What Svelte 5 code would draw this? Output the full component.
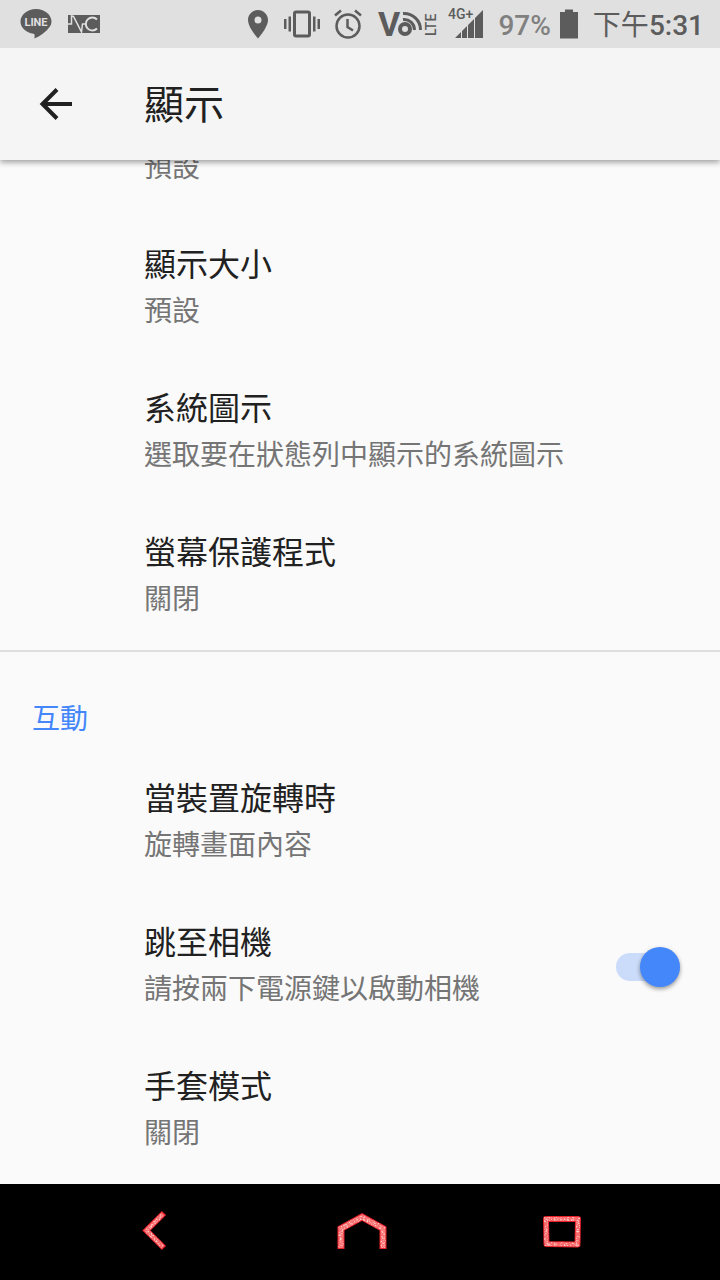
<script lang="ts">
	interface Row {
		title: string;
		summary: string;
	}

	const displayRows: Row[] = [
		{ title: '顯示大小', summary: '預設' },
		{ title: '系統圖示', summary: '選取要在狀態列中顯示的系統圖示' },
		{ title: '螢幕保護程式', summary: '關閉' }
	];

	let cameraJump = $state(true);
</script>

{#snippet row(item: Row)}
	<li>
		<button class="row" type="button">
			<span class="title">{item.title}</span>
			<span class="summary">{item.summary}</span>
		</button>
	</li>
{/snippet}

<div class="screen">
	<div class="status-bar">
		<svg width="32" height="32" viewBox="0 0 32 32" aria-hidden="true">
			<path d="M16 1C7.500 1 0.500 6.600 0.500 13.500c0 6.200 5.500 11.200 13 12.300 1.500.3 1.200 1.600.9 4.700 4-1.600 10-5.400 13.300-9.300 2.500-2.500 3.800-5 3.800-7.700C31.500 6.600 24.500 1 16 1z" fill="#5c5c5c" />
			<text x="16" y="18" text-anchor="middle" font-size="11" font-weight="700" fill="#e0e0e0">LINE</text>
		</svg>
		<svg width="32" height="32" viewBox="0 0 32 32" aria-hidden="true">
			<path d="M0 7h32v18H0z" fill="#5c5c5c" />
			<path d="M0 16h3.500V8l2 .5L13.500 24l1-8H18" fill="none" stroke="#e0e0e0" stroke-width="1.500" />
			<path d="M29 11.500a6.500 6.500 0 1 0 0 9" fill="none" stroke="#e0e0e0" stroke-width="2" />
		</svg>

		<div class="system">
			<svg width="24" height="32" viewBox="0 0 24 32" aria-hidden="true">
				<path fill-rule="evenodd" d="M12 2C6.500 2 2 6.500 2 12c0 7.500 10 18.500 10 18.500S22 19.500 22 12C22 6.500 17.500 2 12 2zm0 6.500a3.500 3.500 0 1 1 0 7 3.500 3.500 0 0 1 0-7z" fill="#5c5c5c" />
			</svg>
			<svg width="36" height="32" viewBox="0 0 36 32" aria-hidden="true">
				<rect x="10.500" y="4" width="15" height="24" rx="1.500" fill="none" stroke="#5c5c5c" stroke-width="3" />
				<path d="M0 11h2.500v10H0zM4.500 8.500H7v15H4.500zM29 8.500h2.500v15H29zM33.500 11H36v10h-2.500z" fill="#5c5c5c" />
			</svg>
			<svg width="28" height="32" viewBox="0 0 28 32" aria-hidden="true">
				<circle cx="14" cy="18" r="11.500" fill="none" stroke="#5c5c5c" stroke-width="2.500" />
				<path d="M13.500 11v8l5.500 3.500M1 7.500l6-5M27 7.500l-6-5" fill="none" stroke="#5c5c5c" stroke-width="2.500" />
			</svg>
			<svg class="volte" width="60" height="32" viewBox="0 0 60 32" aria-hidden="true">
				<text x="0" y="28" font-size="34" font-weight="700" fill="#5c5c5c">V</text>
				<circle cx="27" cy="21" r="5" fill="none" stroke="#5c5c5c" stroke-width="4" />
				<path d="M25 11.500a10.500 10.500 0 0 1 11.500 10.500M25 5.500a16.500 16.500 0 0 1 17.500 16.500" fill="none" stroke="#5c5c5c" stroke-width="3" />
				<text transform="translate(58 28) rotate(-90)" font-size="14" font-weight="500" fill="#5c5c5c">LTE</text>
			</svg>
			<svg class="signal" width="36" height="32" viewBox="0 0 36 32" aria-hidden="true">
				<path d="M7 30l6-6v6zM14 30v-7l5-5v12zM20 30V17l6-6v19zM27 30V10l8-8v28z" fill="#5c5c5c" />
				<path d="M13.500 23v7M19.500 17v13M26.500 10v20" stroke="#e0e0e0" />
				<text x="0" y="11" font-size="14" font-weight="500" fill="#5c5c5c">4G+</text>
			</svg>
			<span class="battery-level">97%</span>
			<svg width="20" height="32" viewBox="0 0 20 32" aria-hidden="true">
				<path d="M1 4h5V1.500h8V4h5v26.500H1z" fill="#5c5c5c" />
			</svg>
			<span class="clock"><span class="period">下午</span>5:31</span>
		</div>
	</div>

	<header>
		<button class="back" type="button" aria-label="返回">
			<svg width="32" height="32" viewBox="0 0 32 32" aria-hidden="true">
				<path d="M32 16H2.500M17 1.500L2.500 16 17 30.500" fill="none" stroke="#212121" stroke-width="4" />
			</svg>
		</button>
		<h1>顯示</h1>
	</header>

	<main>
		<ul class="group">
			<li>
				<button class="row scrolled" type="button">
					<span class="summary">預設</span>
				</button>
			</li>
			{#each displayRows as item}
				{@render row(item)}
			{/each}
		</ul>

		<section>
			<h2>互動</h2>
			<ul>
				{@render row({ title: '當裝置旋轉時', summary: '旋轉畫面內容' })}
				<li>
					<label class="row toggle">
						<span class="text">
							<span class="title">跳至相機</span>
							<span class="summary">請按兩下電源鍵以啟動相機</span>
						</span>
						<input type="checkbox" role="switch" bind:checked={cameraJump} />
					</label>
				</li>
				{@render row({ title: '手套模式', summary: '關閉' })}
			</ul>
		</section>
	</main>

	<nav>
		<!-- speckle shared by the three chalk icons -->
		<svg class="defs" width="0" height="0" aria-hidden="true">
			<filter id="chalk" x="-20%" y="-20%" width="140%" height="140%">
				<feTurbulence type="fractalNoise" baseFrequency="0.6" numOctaves="2" seed="4" />
				<feColorMatrix values="0 0 0 0 1  0 0 0 0 0.85  0 0 0 0 0.83  2.5 0 0 0 -1.2" />
				<feComposite in2="SourceGraphic" operator="in" result="grain" />
				<feMerge>
					<feMergeNode in="SourceGraphic" />
					<feMergeNode in="grain" />
				</feMerge>
			</filter>
		</svg>
		<button type="button" aria-label="返回上一頁">
			<svg width="56" height="48" viewBox="0 0 56 48" aria-hidden="true">
				<g fill="none">
					<path d="M36 5L18.500 22.500 36 40" stroke="#e8202c" stroke-width="6" />
					<path d="M35 6L18.500 22.500 35 39" stroke="#fb6b6b" stroke-width="4" filter="url(#chalk)" />
				</g>
			</svg>
		</button>
		<button type="button" aria-label="主畫面">
			<svg width="56" height="48" viewBox="0 0 56 48" aria-hidden="true">
				<g fill="none">
					<path d="M9 41V20.500L30 9l21 11.500V41" stroke="#e8202c" stroke-width="7" />
					<path d="M9 40V20.500L30 9l21 11.500V40" stroke="#fb7070" stroke-width="5" filter="url(#chalk)" />
				</g>
			</svg>
		</button>
		<button type="button" aria-label="最近使用">
			<svg width="56" height="48" viewBox="0 0 56 48" aria-hidden="true">
				<g fill="none">
					<path d="M10 11h32l-.5 25.500-31 -.5z" stroke="#e8202c" stroke-width="6" stroke-linejoin="round" />
					<path d="M10 11h32l-.5 25.500-31 -.5z" stroke="#fb6b6b" stroke-width="4" filter="url(#chalk)" />
				</g>
			</svg>
		</button>
	</nav>
</div>

<style>
	:global(body) {
		margin: 0;
		background: #fafafa;
	}

	.screen {
		display: flex;
		flex-direction: column;
		min-height: 100vh;
		font-family: Roboto, 'Noto Sans CJK TC', sans-serif;
		color: #212121;
	}

	svg {
		display: block;
		flex: none;
		overflow: visible;
	}

	button {
		padding: 0;
		border: 0;
		background: none;
		font: inherit;
		color: inherit;
		text-align: left;
		cursor: pointer;
	}

	ul {
		margin: 0;
		padding: 0;
		list-style: none;
	}

	.status-bar {
		position: relative;
		z-index: 2;
		display: flex;
		align-items: center;
		gap: 16px;
		height: 48px;
		padding: 0 16px 0 20px;
		background: #e0e0e0;
		color: #5c5c5c;
	}

	.system {
		display: flex;
		align-items: center;
		gap: 14px;
		margin-left: auto;
	}

	.volte {
		margin-left: 2px;
	}

	.signal {
		margin-left: -4px;
	}

	.battery-level,
	.clock {
		padding-top: 4px;
		font-size: 28px;
		line-height: 32px;
		font-weight: 500;
		white-space: nowrap;
	}

	.battery-level {
		margin-right: -6px;
		color: #808080;
	}

	.period {
		font-weight: 400;
	}

	header {
		position: relative;
		z-index: 1;
		display: flex;
		align-items: center;
		height: 112px;
		background: #f5f5f5;
		box-shadow: 0 2px 6px rgba(0, 0, 0, 0.4);
	}

	.back {
		display: flex;
		align-items: center;
		width: 144px;
		height: 112px;
		padding-left: 40px;
		box-sizing: border-box;
	}

	h1 {
		margin: 0;
		padding-top: 4px;
		font-size: 40px;
		line-height: 48px;
		font-weight: 400;
	}

	main {
		flex: 1;
	}

	.group {
		padding-bottom: 2px;
		border-bottom: 2px solid #dedede;
	}

	.row {
		display: flex;
		flex-direction: column;
		justify-content: center;
		gap: 4px;
		box-sizing: border-box;
		width: 100%;
		min-height: 144px;
		padding: 26px 40px 28px 144px;
	}

	/* first entry is scrolled halfway under the header */
	.row.scrolled {
		justify-content: flex-end;
		height: 56px;
		min-height: 0;
		padding-top: 0;
	}

	.row.toggle {
		flex-direction: row;
		align-items: center;
		justify-content: space-between;
		cursor: pointer;
	}

	.text {
		display: flex;
		flex-direction: column;
		gap: 4px;
	}

	.title {
		font-size: 32px;
		line-height: 46px;
	}

	.summary {
		color: #757575;
		font-size: 28px;
		line-height: 40px;
	}

	h2 {
		margin: 0;
		padding: 48px 32px 10px;
		color: #4487fb;
		font-size: 28px;
		line-height: 40px;
		font-weight: 400;
	}

	input {
		appearance: none;
		position: relative;
		flex: none;
		width: 64px;
		height: 28px;
		margin: 4px 0 0;
		border-radius: 14px;
		background: #c0c0c0;
		cursor: pointer;
	}

	input::before {
		content: '';
		position: absolute;
		top: -6px;
		left: 0;
		width: 40px;
		height: 40px;
		border-radius: 50%;
		background: #f5f5f5;
		box-shadow: 0 2px 4px rgba(0, 0, 0, 0.4);
	}

	input:checked {
		background: #cbdcfa;
	}

	input:checked::before {
		left: 24px;
		background: #4487fb;
	}

	nav {
		display: flex;
		align-items: center;
		justify-content: center;
		gap: 148px;
		height: 96px;
		background: #000;
	}

	.defs {
		position: absolute;
	}
</style>
